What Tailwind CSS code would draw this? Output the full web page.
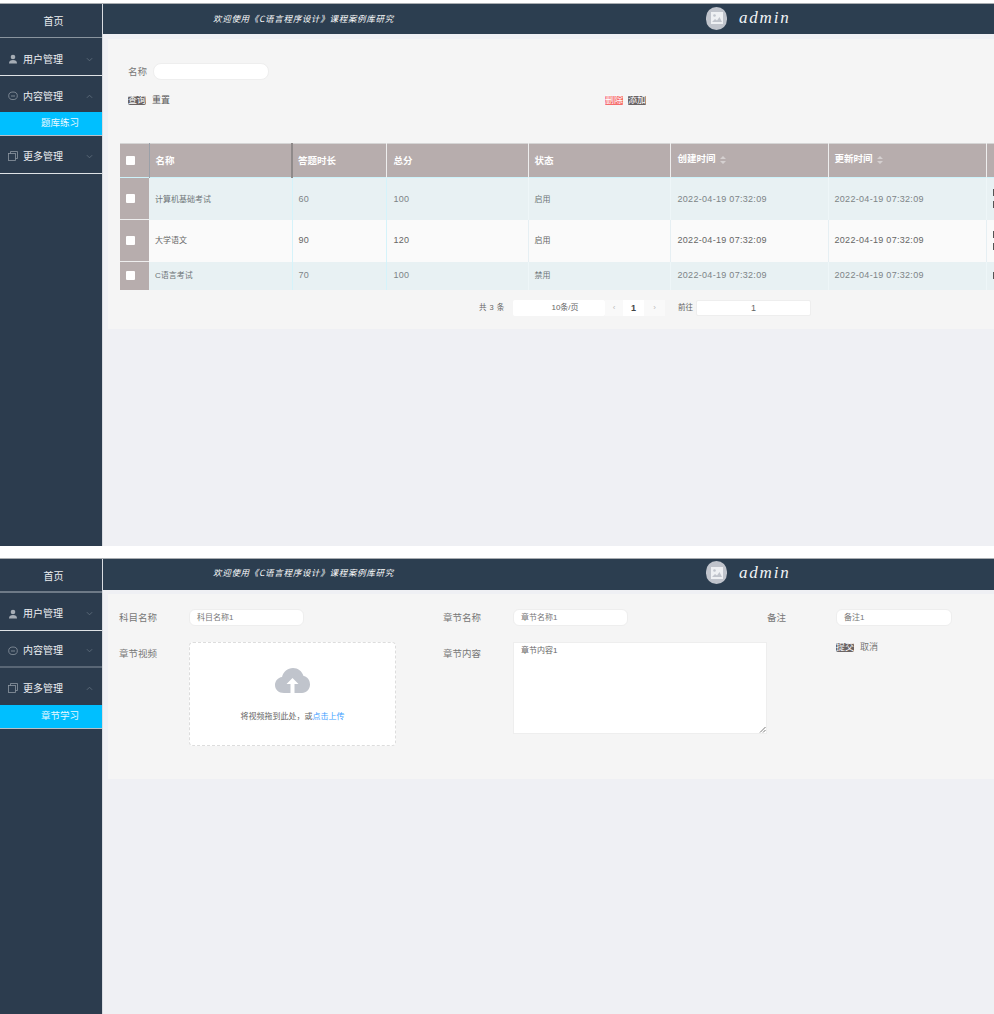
<!DOCTYPE html>
<html lang="zh">
<head>
<meta charset="utf-8">
<script src="https://cdn.jsdelivr.net/npm/@tailwindcss/browser@4"></script>
</head>
<body class="bg-white font-['Liberation_Sans','Noto_Sans_CJK_SC',sans-serif] w-[994px] h-[1014px] overflow-hidden">
<div class="pt-[3px]">
  <!-- PANEL 1 -->
  <section class="flex h-[543px] bg-[#eff0f4] border-t border-[#a9adb1] overflow-hidden">
    <aside class="w-[102px] shrink-0 bg-[#2c3c4e] text-[#eceff2] text-[10px]">
      <div class="h-[34px] flex items-center justify-center border-b border-[#8a949e] pl-[5px] pt-[2px] text-[10px]">首页</div>
      <div class="h-[38px] flex items-center border-b border-[#dfe3e6] pt-[5px]">
        <svg class="ml-[8px] w-[10px] h-[10px] text-[#a6adb5]" viewBox="0 0 10 10" fill="currentColor"><circle cx="5" cy="3" r="2.3"/><path d="M1 9.500c0-2.600 1.700-3.400 4-3.400s4 .8 4 3.400z"/></svg>
        <span class="ml-[5px] w-[63px]">用户管理</span>
        <svg class="w-[7px] h-[5px] text-[#5f6e7d]" viewBox="0 0 8 5" fill="none" stroke="currentColor"><path d="M1 1l3 3 3-3"/></svg>
      </div>
      <div class="h-[36px] flex items-center pt-[4px]">
        <svg class="ml-[8px] w-[10px] h-[10px] text-[#8d97a1]" viewBox="0 0 10 10" fill="none" stroke="currentColor" stroke-width=".8"><ellipse cx="5" cy="4.800" rx="4.300" ry="3.800"/><path d="M3 5h4"/></svg>
        <span class="ml-[5px] w-[63px]">内容管理</span>
        <svg class="w-[7px] h-[5px] text-[#5f6e7d]" viewBox="0 0 8 5" fill="none" stroke="currentColor"><path d="M1 4l3-3 3 3"/></svg>
      </div>
      <div class="h-[24px] flex items-center bg-[#00bfff] border-b border-[#b9c0c7] pl-[41px] text-[9.5px] text-[#eaf9ff]">题库练习</div>
      <div class="h-[38px] flex items-center border-b border-[#dfe3e6] pt-[3px]">
        <svg class="ml-[8px] w-[10px] h-[10px] text-[#8d97a1]" viewBox="0 0 10 10" fill="none" stroke="currentColor" stroke-width=".8"><rect x=".5" y="2.500" width="7" height="7"/><path d="M2.500 2.500V.5h7v7h-2"/></svg>
        <span class="ml-[5px] w-[63px]">更多管理</span>
        <svg class="w-[7px] h-[5px] text-[#5f6e7d]" viewBox="0 0 8 5" fill="none" stroke="currentColor"><path d="M1 1l3 3 3-3"/></svg>
      </div>
    </aside>
    <div class="w-px bg-[#d9dce1] shrink-0"></div>
    <main class="flex-1 min-w-0 flex flex-col">
      <header class="h-[30px] shrink-0 bg-[#2c3e50] flex items-center text-white pb-[2px]">
        <span class="ml-[110px] w-[493px] text-[8.5px] tracking-[.7px] italic font-['Noto_Sans_CJK_SC',sans-serif]">欢迎使用《C语言程序设计》课程案例库研究</span>
        <span class="w-[21px] h-[23px] rounded-full bg-[#c0c4cc] flex items-center justify-center">
          <svg class="w-[12px] h-[12px]" viewBox="0 0 12 12"><rect width="12" height="12" fill="#eef0f3"/><circle cx="3.500" cy="3.500" r="1.300" fill="#c0c4cc"/><path d="M1 10l3-3 2 1.500L8.500 5 11 10z" fill="#c0c4cc"/></svg>
        </span>
        <span class="ml-[12px] text-[17px] tracking-[1.8px] italic font-['Liberation_Serif',serif] text-[#f2f4f6]">admin</span>
      </header>
      <div class="ml-[5px] mt-[5px] h-[290px] bg-[#f5f5f5] text-[#666] overflow-hidden">
        <div class="pt-[24px] pl-[20px] flex items-center h-[41px]">
          <span class="text-[9.5px] w-[25px] text-[#777] pt-[2px]">名称</span>
          <span class="w-[116px] h-[17px] bg-white rounded-[8px] border border-[#eeeeee]"></span>
        </div>
        <div class="mt-[13px] pl-[20px] flex items-center h-[14px] text-[9px]">
          <span class="w-[18px] h-[9px] leading-[9px] text-center bg-[#6a6464] text-white rounded-[2px]">查询</span>
          <span class="ml-[6px] w-[18px] text-[#555] leading-[9px]">重置</span>
          <span class="ml-[435px] w-[18px] h-[9px] leading-[9px] text-center bg-[#f56c6c] text-white rounded-[1px]">删除</span>
          <span class="ml-[5px] w-[18px] h-[9px] leading-[9px] text-center bg-[#6a6464] text-white rounded-[1px]">添加</span>
        </div>
        <table class="mt-[36px] ml-[12px] table-fixed border-collapse w-[900px] text-[9px]">
          <colgroup><col class="w-[29px]"><col class="w-[143px]"><col class="w-[94px]"><col class="w-[142px]"><col class="w-[142px]"><col class="w-[158px]"><col class="w-[158px]"><col class="w-[34px]"></colgroup>
          <thead class="bg-[#b7adad] text-white text-[9.5px] font-bold text-left">
            <tr class="h-[34px] border-t border-[#d5d5d5]">
              <th class="border-r border-[#9aa0a8]"><span class="block ml-[6px] w-[9px] h-[9px] bg-white rounded-[1px]"></span></th>
              <th class="pl-[6px] pt-[2px] border-r-2 border-[#8f8a8a]">名称</th>
              <th class="pl-[5px] pt-[2px] border-r border-[#eeeeee]">答题时长</th>
              <th class="pl-[7px] pt-[2px] border-r border-[#eeeeee]">总分</th>
              <th class="pl-[6px] pt-[2px] border-r border-[#eeeeee]">状态</th>
              <th class="pl-[7px] pb-[2px] border-r border-[#eeeeee]"><span class="inline-flex items-center gap-[4px]">创建时间<svg class="w-[6px] h-[8px]" viewBox="0 0 6 8" fill="#d5d0d0"><path d="M3 0l3 3H0zM3 8L0 5h6z"/></svg></span></th>
              <th class="pl-[6px] pb-[2px] border-r border-[#eeeeee]"><span class="inline-flex items-center gap-[4px]">更新时间<svg class="w-[6px] h-[8px]" viewBox="0 0 6 8" fill="#d5d0d0"><path d="M3 0l3 3H0zM3 8L0 5h6z"/></svg></span></th>
              <th></th>
            </tr>
          </thead>
          <tbody class="tracking-[.3px]">
            <tr class="h-[42px] bg-[#e8f1f3] border-t border-[#cdf3fb] text-[#7d8487]">
              <td class="bg-[#b7adad] border-b border-[#eeeeee]"><span class="block ml-[6px] w-[9px] h-[9px] bg-white rounded-[1px]"></span></td>
              <td class="pl-[6px] pt-[2px] border-r border-[#d5f3fa] tracking-normal text-[8px] text-[#6e7578]">计算机基础考试</td>
              <td class="pl-[6px] pt-[2px] border-r border-[#d5f3fa]">60</td>
              <td class="pl-[7px] pt-[2px] border-r border-[#eef6f8]">100</td>
              <td class="pl-[6px] pt-[2px] border-r border-[#eef6f8] tracking-normal text-[8px] text-[#6e7578]">启用</td>
              <td class="pl-[7px] pt-[2px] border-r border-[#eef6f8] whitespace-nowrap">2022-04-19 07:32:09</td>
              <td class="pl-[6px] pt-[2px] border-r border-[#eef6f8] whitespace-nowrap">2022-04-19 07:32:09</td>
              <td class="pl-[6px]"><span class="block w-[6px] h-[7px] bg-[#555] mb-[5px]"></span><span class="block w-[6px] h-[7px] bg-[#555]"></span></td>
            </tr>
            <tr class="h-[42px] bg-[#fafafa] text-[#666]">
              <td class="bg-[#b7adad] border-b border-[#eeeeee]"><span class="block ml-[6px] w-[9px] h-[9px] bg-white rounded-[1px]"></span></td>
              <td class="pl-[6px] border-r border-[#d5f3fa] tracking-normal text-[8px]">大学语文</td>
              <td class="pl-[6px] border-r border-[#d5f3fa]">90</td>
              <td class="pl-[7px] border-r border-[#e6eff3]">120</td>
              <td class="pl-[6px] border-r border-[#e6eff3] tracking-normal text-[8px]">启用</td>
              <td class="pl-[7px] border-r border-[#e6eff3] whitespace-nowrap">2022-04-19 07:32:09</td>
              <td class="pl-[6px] border-r border-[#e6eff3] whitespace-nowrap">2022-04-19 07:32:09</td>
              <td class="pl-[6px]"><span class="block w-[6px] h-[7px] bg-[#555] mb-[5px]"></span><span class="block w-[6px] h-[7px] bg-[#555]"></span></td>
            </tr>
            <tr class="h-[28px] bg-[#e8f1f3] text-[#7d8487]">
              <td class="bg-[#b7adad]"><span class="block ml-[6px] w-[9px] h-[9px] bg-white rounded-[1px]"></span></td>
              <td class="pl-[6px] pt-[1px] border-r border-[#d5f3fa] tracking-normal text-[8px] text-[#6e7578]">C语言考试</td>
              <td class="pl-[6px] pt-[1px] border-r border-[#d5f3fa]">70</td>
              <td class="pl-[7px] pt-[1px] border-r border-[#eef6f8]">100</td>
              <td class="pl-[6px] pt-[1px] border-r border-[#eef6f8] tracking-normal text-[8px] text-[#6e7578]">禁用</td>
              <td class="pl-[7px] pt-[1px] border-r border-[#eef6f8] whitespace-nowrap">2022-04-19 07:32:09</td>
              <td class="pl-[6px] pt-[1px] border-r border-[#eef6f8] whitespace-nowrap">2022-04-19 07:32:09</td>
              <td class="pl-[6px]"><span class="block w-[6px] h-[7px] bg-[#555]"></span></td>
            </tr>
          </tbody>
        </table>
        <div class="mt-[10px] pl-[371px] flex items-center h-[16px] text-[8px] text-[#666]">
          <span class="w-[34px] tracking-[.5px] text-[7.5px]">共 3 条</span>
          <span class="w-[92px] h-[16px] leading-[16px] bg-white text-center rounded-[2px] pl-[12px]">10条/页</span>
          <span class="w-[18px] h-[16px] leading-[15px] bg-[#f9f9f9] text-center text-[#bbb]">‹</span>
          <span class="w-[21px] h-[16px] leading-[16px] bg-white text-center font-bold text-[#444] text-[9px]">1</span>
          <span class="w-[21px] h-[16px] leading-[15px] bg-[#f9f9f9] text-center text-[#bbb]">›</span>
          <span class="ml-[13px] w-[18px] text-[7.5px]">前往</span>
          <span class="w-[115px] h-[16px] leading-[15px] bg-white text-center rounded-[2px] border border-[#eeeeee] text-[9px]">1</span>
        </div>
      </div>
    </main>
  </section>

  <div class="h-[12px]"></div>

  <!-- PANEL 2 -->
  <section class="flex h-[456px] bg-[#eff0f4] border-t border-[#a9adb1] overflow-hidden">
    <aside class="w-[102px] shrink-0 bg-[#2c3c4e] text-[#eceff2] text-[10px]">
      <div class="h-[34px] flex items-center justify-center border-b-2 border-[#6e7a87] pl-[5px] pt-[2px] text-[10px]">首页</div>
      <div class="h-[38px] flex items-center border-b border-[#dfe3e6] pt-[4px]">
        <svg class="ml-[8px] w-[10px] h-[10px] text-[#a6adb5]" viewBox="0 0 10 10" fill="currentColor"><circle cx="5" cy="3" r="2.300"/><path d="M1 9.500c0-2.600 1.700-3.400 4-3.400s4 .8 4 3.400z"/></svg>
        <span class="ml-[5px] w-[63px]">用户管理</span>
        <svg class="w-[7px] h-[5px] text-[#5f6e7d]" viewBox="0 0 8 5" fill="none" stroke="currentColor"><path d="M1 1l3 3 3-3"/></svg>
      </div>
      <div class="h-[37px] flex items-center border-b-2 border-[#596675] pt-[4px]">
        <svg class="ml-[8px] w-[10px] h-[10px] text-[#8d97a1]" viewBox="0 0 10 10" fill="none" stroke="currentColor" stroke-width=".8"><ellipse cx="5" cy="4.800" rx="4.300" ry="3.800"/><path d="M3 5h4"/></svg>
        <span class="ml-[5px] w-[63px]">内容管理</span>
        <svg class="w-[7px] h-[5px] text-[#5f6e7d]" viewBox="0 0 8 5" fill="none" stroke="currentColor"><path d="M1 1l3 3 3-3"/></svg>
      </div>
      <div class="h-[37px] flex items-center pt-[3px]">
        <svg class="ml-[8px] w-[10px] h-[10px] text-[#8d97a1]" viewBox="0 0 10 10" fill="none" stroke="currentColor" stroke-width=".8"><rect x=".5" y="2.500" width="7" height="7"/><path d="M2.500 2.500V.5h7v7h-2"/></svg>
        <span class="ml-[5px] w-[63px]">更多管理</span>
        <svg class="w-[7px] h-[5px] text-[#5f6e7d]" viewBox="0 0 8 5" fill="none" stroke="currentColor"><path d="M1 4l3-3 3 3"/></svg>
      </div>
      <div class="h-[24px] flex items-center bg-[#00bfff] border-b border-[#b9c0c7] pl-[41px] text-[9.5px] text-[#eaf9ff]">章节学习</div>
    </aside>
    <div class="w-px bg-[#d9dce1] shrink-0"></div>
    <main class="flex-1 min-w-0 flex flex-col">
      <header class="h-[31px] shrink-0 bg-[#2c3e50] flex items-center text-white pb-[4px]">
        <span class="ml-[110px] w-[493px] text-[8.5px] tracking-[.7px] italic font-['Noto_Sans_CJK_SC',sans-serif]">欢迎使用《C语言程序设计》课程案例库研究</span>
        <span class="w-[21px] h-[23px] rounded-full bg-[#c0c4cc] flex items-center justify-center">
          <svg class="w-[12px] h-[12px]" viewBox="0 0 12 12"><rect width="12" height="12" fill="#eef0f3"/><circle cx="3.500" cy="3.500" r="1.300" fill="#c0c4cc"/><path d="M1 10l3-3 2 1.500L8.500 5 11 10z" fill="#c0c4cc"/></svg>
        </span>
        <span class="ml-[12px] text-[17px] tracking-[1.8px] italic font-['Liberation_Serif',serif] text-[#f2f4f6]">admin</span>
      </header>
      <div class="ml-[5px] mt-[4px] h-[185px] bg-[#f5f5f5] text-[#777] text-[9.5px] pl-[11px] pt-[15px] grid grid-cols-[324px_324px_1fr] grid-rows-[33px_auto] content-start overflow-hidden">
        <div class="flex items-start">
          <span class="w-[70px] leading-[17px]">科目名称</span>
          <span class="w-[115px] h-[17px] leading-[15px] bg-white rounded-[6px] border border-[#eeeeee] pl-[7px] text-[8px] text-[#777]">科目名称1</span>
        </div>
        <div class="flex items-start">
          <span class="w-[70px] leading-[17px]">章节名称</span>
          <span class="w-[115px] h-[17px] leading-[15px] bg-white rounded-[6px] border border-[#eeeeee] pl-[7px] text-[8px] text-[#777]">章节名称1</span>
        </div>
        <div class="flex items-start">
          <span class="w-[69px] leading-[17px]">备注</span>
          <span class="w-[116px] h-[17px] leading-[15px] bg-white rounded-[6px] border border-[#eeeeee] pl-[7px] text-[8px] text-[#777]">备注1</span>
        </div>
        <div class="flex items-start">
          <span class="w-[70px] leading-[24px]">章节视频</span>
          <div class="w-[207px] h-[104px] bg-white rounded-[4px] border border-dashed border-[#dddddd] flex flex-col items-center">
            <svg class="mt-[25px] w-[35px] h-[26px]" viewBox="0 0 35 26"><path d="M9 25C3.500 25 0 21.500 0 17c0-4 3-7.500 7-8C8.500 3.500 12.500 0 18 0c5 0 9 3 10.500 8 3.800.5 6.500 4 6.500 8.500 0 4.500-3.500 8.500-8 8.500z" fill="#c0c4cc"/><path d="M17.500 10l6 6h-4v9h-4v-9h-4z" fill="#fff"/></svg>
            <p class="mt-[17px] text-[8px] text-[#666]">将视频拖到此处，或<span class="text-[#409eff]">点击上传</span></p>
          </div>
        </div>
        <div class="flex items-start">
          <span class="w-[70px] leading-[24px]">章节内容</span>
          <div class="relative w-[254px] h-[92px] bg-white border border-[#eeeeee] px-[7px] py-[2px] text-[8px] text-[#666] leading-[12px]">章节内容1
            <svg class="absolute right-0 bottom-0 w-[7px] h-[7px]" viewBox="0 0 7 7" stroke="#555" stroke-width=".8"><path d="M1 6.500L6.500 1M4 6.500L6.500 4"/></svg>
          </div>
        </div>
        <div class="flex items-start pl-[69px] text-[9px]">
          <span class="w-[18px] h-[9px] mt-[1px] leading-[9px] text-center bg-[#6a6464] text-white rounded-[2px]">提交</span>
          <span class="ml-[6px] leading-[11px]">取消</span>
        </div>
      </div>
    </main>
  </section>
</div>
</body>
</html>
